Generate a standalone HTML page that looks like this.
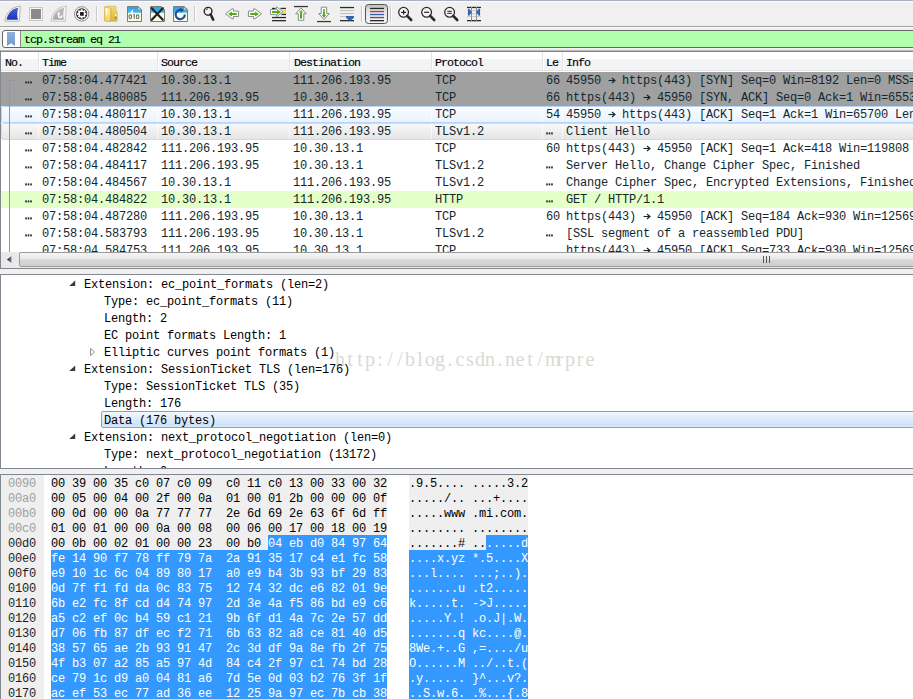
<!DOCTYPE html><html><head><meta charset="utf-8"><style>
*{margin:0;padding:0;box-sizing:border-box}
html,body{width:913px;height:699px;overflow:hidden;background:#f0f0f0}
body{position:relative;font-family:"Liberation Mono",monospace}
.a{position:absolute}
.t{position:absolute;white-space:pre;font-family:"Liberation Mono",monospace;font-size:12px;letter-spacing:-0.2px;line-height:17px;padding-top:1px;color:#12272e}
.h{position:absolute;white-space:pre;font-family:"Liberation Mono",monospace;font-size:11.667px;letter-spacing:-1px;line-height:18px;color:#000;-webkit-text-stroke:0.15px #000}
.x{position:absolute;white-space:pre;font-family:"Liberation Mono",monospace;font-size:12px;letter-spacing:-0.2px;line-height:15px;padding-top:2px;color:#000}
</style></head><body>
<div class="a" style="left:0;top:0;width:913px;height:1px;background:#a9b3c4"></div>
<div class="a" style="left:0;top:1px;width:913px;height:1px;background:#fbfbfb"></div>
<div class="a" style="left:0;top:26px;width:913px;height:1px;background:#a3a3a3"></div>
<div class="a" style="left:0;top:27px;width:913px;height:1px;background:#fdfdfd"></div>
<div class="a" style="left:2px;top:30px;width:920px;height:18px;border:1px solid #666;border-radius:3px;background:#fff"></div>
<div class="a" style="left:21px;top:31px;width:900px;height:16px;background:#afffaf"></div>
<div class="a" style="left:20px;top:31px;width:1px;height:16px;background:#8a8a8a"></div>
<svg class="a" style="left:7px;top:32px" width="8" height="14" viewBox="0 0 8 14"><defs><linearGradient id="bm" x1="0" y1="0" x2="0" y2="1"><stop offset="0" stop-color="#8fb2dc"/><stop offset="1" stop-color="#6f9ad0"/></linearGradient></defs><path d="M0 0H8V14L4 11.2L0 14Z" fill="url(#bm)"/></svg>
<div class="h" style="left:24px;top:31px;line-height:18px">tcp.stream eq 21</div>
<div class="a" style="left:0;top:50px;width:913px;height:219px;background:#fff;border-top:1px solid #b9b9b9;border-left:1px solid #828790;border-bottom:1px solid #828790"></div>
<div class="a" style="left:1px;top:51px;width:912px;height:1px;background:#828790"></div>
<div class="a" style="left:1px;top:52px;width:912px;height:19px;background:linear-gradient(#fff 0,#fff 7px,#f3f4f6 7px,#f3f4f6 18px,#e5e5e5 18px)"></div>
<div class="a" style="left:38px;top:52px;width:1px;height:18px;background:#e3e4e6"></div>
<div class="a" style="left:39px;top:52px;width:1px;height:18px;background:#fff"></div>
<div class="a" style="left:157px;top:52px;width:1px;height:18px;background:#e3e4e6"></div>
<div class="a" style="left:158px;top:52px;width:1px;height:18px;background:#fff"></div>
<div class="a" style="left:289px;top:52px;width:1px;height:18px;background:#e3e4e6"></div>
<div class="a" style="left:290px;top:52px;width:1px;height:18px;background:#fff"></div>
<div class="a" style="left:431px;top:52px;width:1px;height:18px;background:#e3e4e6"></div>
<div class="a" style="left:432px;top:52px;width:1px;height:18px;background:#fff"></div>
<div class="a" style="left:542px;top:52px;width:1px;height:18px;background:#e3e4e6"></div>
<div class="a" style="left:543px;top:52px;width:1px;height:18px;background:#fff"></div>
<div class="a" style="left:562px;top:52px;width:1px;height:18px;background:#e3e4e6"></div>
<div class="a" style="left:563px;top:52px;width:1px;height:18px;background:#fff"></div>
<div class="h" style="left:5px;top:54px">No.</div>
<div class="h" style="left:42px;top:54px">Time</div>
<div class="h" style="left:161px;top:54px">Source</div>
<div class="h" style="left:294px;top:54px">Destination</div>
<div class="h" style="left:435px;top:54px">Protocol</div>
<div class="h" style="left:546px;top:54px">Le</div>
<div class="h" style="left:566px;top:54px">Info</div>
<div class="a" style="left:1px;top:72px;width:912px;height:180px;overflow:hidden">
<div class="a" style="left:0;top:0px;width:912px;height:17px;background:#a0a0a0"></div>
<svg class="a" style="left:24px;top:9px" width="7" height="3" viewBox="0 0 7 3"><rect x="0.2" y="0.4" width="1.6" height="2" fill="#12272e"/><rect x="2.7" y="0.4" width="1.6" height="2" fill="#12272e"/><rect x="5.2" y="0.4" width="1.6" height="2" fill="#12272e"/></svg>
<div class="t" style="left:41px;top:0px">07:58:04.477421</div>
<div class="t" style="left:160px;top:0px">10.30.13.1</div>
<div class="t" style="left:292px;top:0px">111.206.193.95</div>
<div class="t" style="left:434px;top:0px">TCP</div>
<div class="t" style="left:545px;top:0px">66</div>
<svg class="a" style="left:607px;top:5px" width="8" height="7" viewBox="0 0 8 7"><path d="M0.5 3.5H6.5" stroke="#12272e" stroke-width="1.1"/><path d="M4 1L7 3.5L4 6" fill="none" stroke="#12272e" stroke-width="1.1"/></svg>
<div class="t" style="left:565px;top:0px">45950   https(443) [SYN] Seq=0 Win=8192 Len=0 MSS=1460 WS=4 SACK_PERM=1</div>
<div class="a" style="left:0;top:17px;width:912px;height:17px;background:#a0a0a0"></div>
<svg class="a" style="left:24px;top:26px" width="7" height="3" viewBox="0 0 7 3"><rect x="0.2" y="0.4" width="1.6" height="2" fill="#12272e"/><rect x="2.7" y="0.4" width="1.6" height="2" fill="#12272e"/><rect x="5.2" y="0.4" width="1.6" height="2" fill="#12272e"/></svg>
<div class="t" style="left:41px;top:17px">07:58:04.480085</div>
<div class="t" style="left:160px;top:17px">111.206.193.95</div>
<div class="t" style="left:292px;top:17px">10.30.13.1</div>
<div class="t" style="left:434px;top:17px">TCP</div>
<div class="t" style="left:545px;top:17px">66</div>
<svg class="a" style="left:642px;top:22px" width="8" height="7" viewBox="0 0 8 7"><path d="M0.5 3.5H6.5" stroke="#12272e" stroke-width="1.1"/><path d="M4 1L7 3.5L4 6" fill="none" stroke="#12272e" stroke-width="1.1"/></svg>
<div class="t" style="left:565px;top:17px">https(443)   45950 [SYN, ACK] Seq=0 Ack=1 Win=65535 Len=0 MSS=1460</div>
<div class="a" style="left:0;top:34px;width:920px;height:17px;border:1px solid #b8d6fb;border-radius:2px;background:linear-gradient(#fcfdff,#e9f2fd)"></div>
<div class="a" style="left:37px;top:35px;width:1px;height:15px;background:rgba(255,255,255,0.6)"></div>
<div class="a" style="left:156px;top:35px;width:1px;height:15px;background:rgba(255,255,255,0.6)"></div>
<div class="a" style="left:288px;top:35px;width:1px;height:15px;background:rgba(255,255,255,0.6)"></div>
<div class="a" style="left:430px;top:35px;width:1px;height:15px;background:rgba(255,255,255,0.6)"></div>
<div class="a" style="left:541px;top:35px;width:1px;height:15px;background:rgba(255,255,255,0.6)"></div>
<div class="a" style="left:561px;top:35px;width:1px;height:15px;background:rgba(255,255,255,0.6)"></div>
<svg class="a" style="left:24px;top:43px" width="7" height="3" viewBox="0 0 7 3"><rect x="0.2" y="0.4" width="1.6" height="2" fill="#12272e"/><rect x="2.7" y="0.4" width="1.6" height="2" fill="#12272e"/><rect x="5.2" y="0.4" width="1.6" height="2" fill="#12272e"/></svg>
<div class="t" style="left:41px;top:34px">07:58:04.480117</div>
<div class="t" style="left:160px;top:34px">10.30.13.1</div>
<div class="t" style="left:292px;top:34px">111.206.193.95</div>
<div class="t" style="left:434px;top:34px">TCP</div>
<div class="t" style="left:545px;top:34px">54</div>
<svg class="a" style="left:607px;top:39px" width="8" height="7" viewBox="0 0 8 7"><path d="M0.5 3.5H6.5" stroke="#12272e" stroke-width="1.1"/><path d="M4 1L7 3.5L4 6" fill="none" stroke="#12272e" stroke-width="1.1"/></svg>
<div class="t" style="left:565px;top:34px">45950   https(443) [ACK] Seq=1 Ack=1 Win=65700 Len=0</div>
<div class="a" style="left:0;top:51px;width:920px;height:17px;border:1px solid #d9d9d9;border-radius:2px;background:linear-gradient(#f8f8f8,#e5e5e5)"></div>
<div class="a" style="left:37px;top:52px;width:1px;height:15px;background:rgba(255,255,255,0.6)"></div>
<div class="a" style="left:156px;top:52px;width:1px;height:15px;background:rgba(255,255,255,0.6)"></div>
<div class="a" style="left:288px;top:52px;width:1px;height:15px;background:rgba(255,255,255,0.6)"></div>
<div class="a" style="left:430px;top:52px;width:1px;height:15px;background:rgba(255,255,255,0.6)"></div>
<div class="a" style="left:541px;top:52px;width:1px;height:15px;background:rgba(255,255,255,0.6)"></div>
<div class="a" style="left:561px;top:52px;width:1px;height:15px;background:rgba(255,255,255,0.6)"></div>
<svg class="a" style="left:24px;top:60px" width="7" height="3" viewBox="0 0 7 3"><rect x="0.2" y="0.4" width="1.6" height="2" fill="#12272e"/><rect x="2.7" y="0.4" width="1.6" height="2" fill="#12272e"/><rect x="5.2" y="0.4" width="1.6" height="2" fill="#12272e"/></svg>
<div class="t" style="left:41px;top:51px">07:58:04.480504</div>
<div class="t" style="left:160px;top:51px">10.30.13.1</div>
<div class="t" style="left:292px;top:51px">111.206.193.95</div>
<div class="t" style="left:434px;top:51px">TLSv1.2</div>
<svg class="a" style="left:545px;top:60px" width="7" height="3" viewBox="0 0 7 3"><rect x="0.2" y="0.4" width="1.6" height="2" fill="#12272e"/><rect x="2.7" y="0.4" width="1.6" height="2" fill="#12272e"/><rect x="5.2" y="0.4" width="1.6" height="2" fill="#12272e"/></svg>
<div class="t" style="left:565px;top:51px">Client Hello</div>
<svg class="a" style="left:24px;top:77px" width="7" height="3" viewBox="0 0 7 3"><rect x="0.2" y="0.4" width="1.6" height="2" fill="#12272e"/><rect x="2.7" y="0.4" width="1.6" height="2" fill="#12272e"/><rect x="5.2" y="0.4" width="1.6" height="2" fill="#12272e"/></svg>
<div class="t" style="left:41px;top:68px">07:58:04.482842</div>
<div class="t" style="left:160px;top:68px">111.206.193.95</div>
<div class="t" style="left:292px;top:68px">10.30.13.1</div>
<div class="t" style="left:434px;top:68px">TCP</div>
<div class="t" style="left:545px;top:68px">60</div>
<svg class="a" style="left:642px;top:73px" width="8" height="7" viewBox="0 0 8 7"><path d="M0.5 3.5H6.5" stroke="#12272e" stroke-width="1.1"/><path d="M4 1L7 3.5L4 6" fill="none" stroke="#12272e" stroke-width="1.1"/></svg>
<div class="t" style="left:565px;top:68px">https(443)   45950 [ACK] Seq=1 Ack=418 Win=119808 Len=0</div>
<svg class="a" style="left:24px;top:94px" width="7" height="3" viewBox="0 0 7 3"><rect x="0.2" y="0.4" width="1.6" height="2" fill="#12272e"/><rect x="2.7" y="0.4" width="1.6" height="2" fill="#12272e"/><rect x="5.2" y="0.4" width="1.6" height="2" fill="#12272e"/></svg>
<div class="t" style="left:41px;top:85px">07:58:04.484117</div>
<div class="t" style="left:160px;top:85px">111.206.193.95</div>
<div class="t" style="left:292px;top:85px">10.30.13.1</div>
<div class="t" style="left:434px;top:85px">TLSv1.2</div>
<svg class="a" style="left:545px;top:94px" width="7" height="3" viewBox="0 0 7 3"><rect x="0.2" y="0.4" width="1.6" height="2" fill="#12272e"/><rect x="2.7" y="0.4" width="1.6" height="2" fill="#12272e"/><rect x="5.2" y="0.4" width="1.6" height="2" fill="#12272e"/></svg>
<div class="t" style="left:565px;top:85px">Server Hello, Change Cipher Spec, Finished</div>
<svg class="a" style="left:24px;top:111px" width="7" height="3" viewBox="0 0 7 3"><rect x="0.2" y="0.4" width="1.6" height="2" fill="#12272e"/><rect x="2.7" y="0.4" width="1.6" height="2" fill="#12272e"/><rect x="5.2" y="0.4" width="1.6" height="2" fill="#12272e"/></svg>
<div class="t" style="left:41px;top:102px">07:58:04.484567</div>
<div class="t" style="left:160px;top:102px">10.30.13.1</div>
<div class="t" style="left:292px;top:102px">111.206.193.95</div>
<div class="t" style="left:434px;top:102px">TLSv1.2</div>
<svg class="a" style="left:545px;top:111px" width="7" height="3" viewBox="0 0 7 3"><rect x="0.2" y="0.4" width="1.6" height="2" fill="#12272e"/><rect x="2.7" y="0.4" width="1.6" height="2" fill="#12272e"/><rect x="5.2" y="0.4" width="1.6" height="2" fill="#12272e"/></svg>
<div class="t" style="left:565px;top:102px">Change Cipher Spec, Encrypted Extensions, Finished</div>
<div class="a" style="left:0;top:119px;width:912px;height:17px;background:#e4ffc7"></div>
<svg class="a" style="left:24px;top:128px" width="7" height="3" viewBox="0 0 7 3"><rect x="0.2" y="0.4" width="1.6" height="2" fill="#12272e"/><rect x="2.7" y="0.4" width="1.6" height="2" fill="#12272e"/><rect x="5.2" y="0.4" width="1.6" height="2" fill="#12272e"/></svg>
<div class="t" style="left:41px;top:119px">07:58:04.484822</div>
<div class="t" style="left:160px;top:119px">10.30.13.1</div>
<div class="t" style="left:292px;top:119px">111.206.193.95</div>
<div class="t" style="left:434px;top:119px">HTTP</div>
<svg class="a" style="left:545px;top:128px" width="7" height="3" viewBox="0 0 7 3"><rect x="0.2" y="0.4" width="1.6" height="2" fill="#12272e"/><rect x="2.7" y="0.4" width="1.6" height="2" fill="#12272e"/><rect x="5.2" y="0.4" width="1.6" height="2" fill="#12272e"/></svg>
<div class="t" style="left:565px;top:119px">GET / HTTP/1.1</div>
<svg class="a" style="left:24px;top:145px" width="7" height="3" viewBox="0 0 7 3"><rect x="0.2" y="0.4" width="1.6" height="2" fill="#12272e"/><rect x="2.7" y="0.4" width="1.6" height="2" fill="#12272e"/><rect x="5.2" y="0.4" width="1.6" height="2" fill="#12272e"/></svg>
<div class="t" style="left:41px;top:136px">07:58:04.487280</div>
<div class="t" style="left:160px;top:136px">111.206.193.95</div>
<div class="t" style="left:292px;top:136px">10.30.13.1</div>
<div class="t" style="left:434px;top:136px">TCP</div>
<div class="t" style="left:545px;top:136px">60</div>
<svg class="a" style="left:642px;top:141px" width="8" height="7" viewBox="0 0 8 7"><path d="M0.5 3.5H6.5" stroke="#12272e" stroke-width="1.1"/><path d="M4 1L7 3.5L4 6" fill="none" stroke="#12272e" stroke-width="1.1"/></svg>
<div class="t" style="left:565px;top:136px">https(443)   45950 [ACK] Seq=184 Ack=930 Win=125696 Len=0</div>
<svg class="a" style="left:24px;top:162px" width="7" height="3" viewBox="0 0 7 3"><rect x="0.2" y="0.4" width="1.6" height="2" fill="#12272e"/><rect x="2.7" y="0.4" width="1.6" height="2" fill="#12272e"/><rect x="5.2" y="0.4" width="1.6" height="2" fill="#12272e"/></svg>
<div class="t" style="left:41px;top:153px">07:58:04.583793</div>
<div class="t" style="left:160px;top:153px">111.206.193.95</div>
<div class="t" style="left:292px;top:153px">10.30.13.1</div>
<div class="t" style="left:434px;top:153px">TLSv1.2</div>
<svg class="a" style="left:545px;top:162px" width="7" height="3" viewBox="0 0 7 3"><rect x="0.2" y="0.4" width="1.6" height="2" fill="#12272e"/><rect x="2.7" y="0.4" width="1.6" height="2" fill="#12272e"/><rect x="5.2" y="0.4" width="1.6" height="2" fill="#12272e"/></svg>
<div class="t" style="left:565px;top:153px">[SSL segment of a reassembled PDU]</div>
<div class="t" style="left:41px;top:170px">07:58:04.584753</div>
<div class="t" style="left:160px;top:170px">111.206.193.95</div>
<div class="t" style="left:292px;top:170px">10.30.13.1</div>
<div class="t" style="left:434px;top:170px">TCP</div>
<svg class="a" style="left:642px;top:175px" width="8" height="7" viewBox="0 0 8 7"><path d="M0.5 3.5H6.5" stroke="#12272e" stroke-width="1.1"/><path d="M4 1L7 3.5L4 6" fill="none" stroke="#12272e" stroke-width="1.1"/></svg>
<div class="t" style="left:565px;top:170px">https(443)   45950 [ACK] Seq=733 Ack=930 Win=125696 Len=0</div>
<div class="a" style="left:8px;top:8px;width:1px;height:172px;background:#8e989e"></div>
<div class="a" style="left:8px;top:8px;width:8px;height:1px;background:#8e989e"></div>
</div>
<div class="a" style="left:1px;top:252px;width:912px;height:16px;background:#e9e9e9"></div>
<svg class="a" style="left:7px;top:256px" width="5" height="7" viewBox="0 0 5 7"><defs><linearGradient id="sa" x1="0" y1="0" x2="1" y2="0"><stop offset="0" stop-color="#111"/><stop offset="1" stop-color="#888"/></linearGradient></defs><path d="M4.5 0V7L0 3.5Z" fill="url(#sa)"/></svg>
<div class="a" style="left:19px;top:252px;width:900px;height:15px;border:1px solid #9b9b9b;border-radius:2px;background:linear-gradient(#f6f6f6 0,#e8e8e8 45%,#d6d6d6 55%,#cfcfcf 100%)"></div>
<div class="a" style="left:763px;top:256px;width:7px;height:7px;background:repeating-linear-gradient(90deg,#555 0,#555 1px,transparent 1px,transparent 3px)"></div>
<div class="a" style="left:0;top:274px;width:913px;height:195px;background:#fff;border-top:1px solid #828790;border-left:1px solid #828790;border-bottom:1px solid #828790"></div>
<div class="a" style="left:335px;top:347px;font-family:'Liberation Serif',serif;font-size:20px;line-height:24px;color:#dadad6;white-space:pre"><span style="display:inline-block;width:10px;text-align:center">h</span><span style="display:inline-block;width:10px;text-align:center">t</span><span style="display:inline-block;width:10px;text-align:center">t</span><span style="display:inline-block;width:10px;text-align:center">p</span><span style="display:inline-block;width:10px;text-align:center">:</span><span style="display:inline-block;width:10px;text-align:center">/</span><span style="display:inline-block;width:10px;text-align:center">/</span><span style="display:inline-block;width:10px;text-align:center">b</span><span style="display:inline-block;width:10px;text-align:center">l</span><span style="display:inline-block;width:10px;text-align:center">o</span><span style="display:inline-block;width:10px;text-align:center">g</span><span style="display:inline-block;width:10px;text-align:center">.</span><span style="display:inline-block;width:10px;text-align:center">c</span><span style="display:inline-block;width:10px;text-align:center">s</span><span style="display:inline-block;width:10px;text-align:center">d</span><span style="display:inline-block;width:10px;text-align:center">n</span><span style="display:inline-block;width:10px;text-align:center">.</span><span style="display:inline-block;width:10px;text-align:center">n</span><span style="display:inline-block;width:10px;text-align:center">e</span><span style="display:inline-block;width:10px;text-align:center">t</span><span style="display:inline-block;width:10px;text-align:center">/</span><span style="display:inline-block;width:10px;text-align:center">m</span><span style="display:inline-block;width:10px;text-align:center">r</span><span style="display:inline-block;width:10px;text-align:center">p</span><span style="display:inline-block;width:10px;text-align:center">r</span><span style="display:inline-block;width:10px;text-align:center">e</span></div>
<div class="a" style="left:1px;top:275px;width:912px;height:193px;overflow:hidden">
<svg class="a" style="left:68px;top:5px" width="8" height="8" viewBox="0 0 8 8"><path d="M6.2 0.5V6H0.2Z" fill="#3a3a3a"/></svg>
<div class="t" style="left:83px;top:0px;padding-top:2px;color:#000">Extension: ec_point_formats (len=2)</div>
<div class="t" style="left:103px;top:17px;padding-top:2px;color:#000">Type: ec_point_formats (11)</div>
<div class="t" style="left:103px;top:34px;padding-top:2px;color:#000">Length: 2</div>
<div class="t" style="left:103px;top:51px;padding-top:2px;color:#000">EC point formats Length: 1</div>
<svg class="a" style="left:88px;top:72px" width="8" height="10" viewBox="0 0 8 10"><path d="M1.5 1.5L5.5 5L1.5 8.5Z" fill="none" stroke="#909090"/></svg>
<div class="t" style="left:103px;top:68px;padding-top:2px;color:#000">Elliptic curves point formats (1)</div>
<svg class="a" style="left:68px;top:90px" width="8" height="8" viewBox="0 0 8 8"><path d="M6.2 0.5V6H0.2Z" fill="#3a3a3a"/></svg>
<div class="t" style="left:83px;top:85px;padding-top:2px;color:#000">Extension: SessionTicket TLS (len=176)</div>
<div class="t" style="left:103px;top:102px;padding-top:2px;color:#000">Type: SessionTicket TLS (35)</div>
<div class="t" style="left:103px;top:119px;padding-top:2px;color:#000">Length: 176</div>
<div class="a" style="left:100px;top:136px;width:830px;height:17px;border:1px solid #7da2ce;border-radius:2px;background:linear-gradient(#f8fbff 0,#edf5fe 1px,#dceafc 55%,#cce2fb 92%,#e6f0fd 100%)"></div>
<div class="t" style="left:103px;top:136px;padding-top:2px;color:#000">Data (176 bytes)</div>
<svg class="a" style="left:68px;top:158px" width="8" height="8" viewBox="0 0 8 8"><path d="M6.2 0.5V6H0.2Z" fill="#3a3a3a"/></svg>
<div class="t" style="left:83px;top:153px;padding-top:2px;color:#000">Extension: next_protocol_negotiation (len=0)</div>
<div class="t" style="left:103px;top:170px;padding-top:2px;color:#000">Type: next_protocol_negotiation (13172)</div>
<div class="t" style="left:103px;top:187px;padding-top:2px;color:#000">Length: 0</div>
</div>
<div class="a" style="left:0;top:474px;width:913px;height:230px;background:#fff;border-top:1px solid #828790;border-left:1px solid #828790"></div>
<div class="a" style="left:1px;top:475px;width:43px;height:230px;background:#efefef"></div>
<div class="x" style="left:8px;top:475px;color:#a0a0a0">0090</div>
<div class="a" style="left:51px;top:475px;width:336px;height:15px;background:#efefef"></div>
<div class="a" style="left:409px;top:475px;width:119px;height:15px;background:#efefef"></div>
<div class="x" style="left:51px;top:475px">00 39 00 35 c0 07 c0 09  c0 11 c0 13 00 33 00 32</div>
<div class="x" style="left:409px;top:475px">.9.5.... .....3.2</div>
<div class="x" style="left:8px;top:490px;color:#a0a0a0">00a0</div>
<div class="a" style="left:51px;top:490px;width:336px;height:15px;background:#efefef"></div>
<div class="a" style="left:409px;top:490px;width:119px;height:15px;background:#efefef"></div>
<div class="x" style="left:51px;top:490px">00 05 00 04 00 2f 00 0a  01 00 01 2b 00 00 00 0f</div>
<div class="x" style="left:409px;top:490px">...../.. ...+....</div>
<div class="x" style="left:8px;top:505px;color:#a0a0a0">00b0</div>
<div class="a" style="left:51px;top:505px;width:336px;height:15px;background:#efefef"></div>
<div class="a" style="left:409px;top:505px;width:119px;height:15px;background:#efefef"></div>
<div class="x" style="left:51px;top:505px">00 0d 00 00 0a 77 77 77  2e 6d 69 2e 63 6f 6d ff</div>
<div class="x" style="left:409px;top:505px">.....www .mi.com.</div>
<div class="x" style="left:8px;top:520px;color:#a0a0a0">00c0</div>
<div class="a" style="left:51px;top:520px;width:336px;height:15px;background:#efefef"></div>
<div class="a" style="left:409px;top:520px;width:119px;height:15px;background:#efefef"></div>
<div class="x" style="left:51px;top:520px">01 00 01 00 00 0a 00 08  00 06 00 17 00 18 00 19</div>
<div class="x" style="left:409px;top:520px">........ ........</div>
<div class="x" style="left:8px;top:535px;color:#1e1e1e">00d0</div>
<div class="a" style="left:51px;top:535px;width:217px;height:15px;background:#efefef"></div>
<div class="a" style="left:268px;top:535px;width:119px;height:15px;background:#3399ff"></div>
<div class="a" style="left:409px;top:535px;width:77px;height:15px;background:#efefef"></div>
<div class="a" style="left:486px;top:535px;width:42px;height:15px;background:#3399ff"></div>
<div class="x" style="left:51px;top:535px">00 0b 00 02 01 00 00 23  00 b0 </div>
<div class="x" style="left:268px;top:535px;color:#fff">04 eb d0 84 97 64</div>
<div class="x" style="left:409px;top:535px">.......# ..</div>
<div class="x" style="left:486px;top:535px;color:#fff">.....d</div>
<div class="x" style="left:8px;top:550px;color:#1e1e1e">00e0</div>
<div class="a" style="left:51px;top:550px;width:336px;height:15px;background:#3399ff"></div>
<div class="a" style="left:409px;top:550px;width:119px;height:15px;background:#3399ff"></div>
<div class="x" style="left:51px;top:550px;color:#fff">fe 14 90 f7 78 ff 79 7a  2a 91 35 17 c4 e1 fc 58</div>
<div class="x" style="left:409px;top:550px;color:#fff">....x.yz *.5....X</div>
<div class="x" style="left:8px;top:565px;color:#1e1e1e">00f0</div>
<div class="a" style="left:51px;top:565px;width:336px;height:15px;background:#3399ff"></div>
<div class="a" style="left:409px;top:565px;width:119px;height:15px;background:#3399ff"></div>
<div class="x" style="left:51px;top:565px;color:#fff">e9 10 1c 6c 04 89 80 17  a0 e9 b4 3b 93 bf 29 83</div>
<div class="x" style="left:409px;top:565px;color:#fff">...l.... ...;..).</div>
<div class="x" style="left:8px;top:580px;color:#1e1e1e">0100</div>
<div class="a" style="left:51px;top:580px;width:336px;height:15px;background:#3399ff"></div>
<div class="a" style="left:409px;top:580px;width:119px;height:15px;background:#3399ff"></div>
<div class="x" style="left:51px;top:580px;color:#fff">0d 7f f1 fd da 0c 83 75  12 74 32 dc e6 82 01 9e</div>
<div class="x" style="left:409px;top:580px;color:#fff">.......u .t2.....</div>
<div class="x" style="left:8px;top:595px;color:#1e1e1e">0110</div>
<div class="a" style="left:51px;top:595px;width:336px;height:15px;background:#3399ff"></div>
<div class="a" style="left:409px;top:595px;width:119px;height:15px;background:#3399ff"></div>
<div class="x" style="left:51px;top:595px;color:#fff">6b e2 fc 8f cd d4 74 97  2d 3e 4a f5 86 bd e9 c6</div>
<div class="x" style="left:409px;top:595px;color:#fff">k.....t. -&gt;J.....</div>
<div class="x" style="left:8px;top:610px;color:#1e1e1e">0120</div>
<div class="a" style="left:51px;top:610px;width:336px;height:15px;background:#3399ff"></div>
<div class="a" style="left:409px;top:610px;width:119px;height:15px;background:#3399ff"></div>
<div class="x" style="left:51px;top:610px;color:#fff">a5 c2 ef 0c b4 59 c1 21  9b 6f d1 4a 7c 2e 57 dd</div>
<div class="x" style="left:409px;top:610px;color:#fff">.....Y.! .o.J|.W.</div>
<div class="x" style="left:8px;top:625px;color:#1e1e1e">0130</div>
<div class="a" style="left:51px;top:625px;width:336px;height:15px;background:#3399ff"></div>
<div class="a" style="left:409px;top:625px;width:119px;height:15px;background:#3399ff"></div>
<div class="x" style="left:51px;top:625px;color:#fff">d7 06 fb 87 df ec f2 71  6b 63 82 a8 ce 81 40 d5</div>
<div class="x" style="left:409px;top:625px;color:#fff">.......q kc....@.</div>
<div class="x" style="left:8px;top:640px;color:#1e1e1e">0140</div>
<div class="a" style="left:51px;top:640px;width:336px;height:15px;background:#3399ff"></div>
<div class="a" style="left:409px;top:640px;width:119px;height:15px;background:#3399ff"></div>
<div class="x" style="left:51px;top:640px;color:#fff">38 57 65 ae 2b 93 91 47  2c 3d df 9a 8e fb 2f 75</div>
<div class="x" style="left:409px;top:640px;color:#fff">8We.+..G ,=..../u</div>
<div class="x" style="left:8px;top:655px;color:#1e1e1e">0150</div>
<div class="a" style="left:51px;top:655px;width:336px;height:15px;background:#3399ff"></div>
<div class="a" style="left:409px;top:655px;width:119px;height:15px;background:#3399ff"></div>
<div class="x" style="left:51px;top:655px;color:#fff">4f b3 07 a2 85 a5 97 4d  84 c4 2f 97 c1 74 bd 28</div>
<div class="x" style="left:409px;top:655px;color:#fff">O......M ../..t.(</div>
<div class="x" style="left:8px;top:670px;color:#1e1e1e">0160</div>
<div class="a" style="left:51px;top:670px;width:336px;height:15px;background:#3399ff"></div>
<div class="a" style="left:409px;top:670px;width:119px;height:15px;background:#3399ff"></div>
<div class="x" style="left:51px;top:670px;color:#fff">ce 79 1c d9 a0 04 81 a6  7d 5e 0d 03 b2 76 3f 1f</div>
<div class="x" style="left:409px;top:670px;color:#fff">.y...... }^...v?.</div>
<div class="x" style="left:8px;top:685px;color:#1e1e1e">0170</div>
<div class="a" style="left:51px;top:685px;width:336px;height:15px;background:#3399ff"></div>
<div class="a" style="left:409px;top:685px;width:119px;height:15px;background:#3399ff"></div>
<div class="x" style="left:51px;top:685px;color:#fff">ac ef 53 ec 77 ad 36 ee  12 25 9a 97 ec 7b cb 38</div>
<div class="x" style="left:409px;top:685px;color:#fff">..S.w.6. .%...{.8</div>
<svg class="a" style="left:0;top:0" width="913" height="26" viewBox="0 0 913 26">
<defs><linearGradient id="fin" x1="0" y1="0" x2="0" y2="1"><stop offset="0" stop-color="#4a67dc"/><stop offset="1" stop-color="#1b33b5"/></linearGradient><linearGradient id="fing" x1="0" y1="0" x2="0" y2="1"><stop offset="0" stop-color="#bdbdbd"/><stop offset="1" stop-color="#a8a8a8"/></linearGradient><linearGradient id="fblue" x1="0" y1="0" x2="0" y2="1"><stop offset="0" stop-color="#1fa6f0"/><stop offset="1" stop-color="#4ab8f0"/></linearGradient><linearGradient id="fold" x1="0" y1="0" x2="0" y2="1"><stop offset="0" stop-color="#f4dc70"/><stop offset="1" stop-color="#dcb23a"/></linearGradient><linearGradient id="foldf" x1="0" y1="0" x2="0" y2="1"><stop offset="0" stop-color="#fbf0a8"/><stop offset="1" stop-color="#eed26a"/></linearGradient><linearGradient id="grn" x1="0" y1="0" x2="0" y2="1"><stop offset="0" stop-color="#7cd03a"/><stop offset="1" stop-color="#3a9a10"/></linearGradient><linearGradient id="btn" x1="0" y1="0" x2="0" y2="1"><stop offset="0" stop-color="#bcbcbc"/><stop offset="0.35" stop-color="#e4e4e4"/><stop offset="1" stop-color="#f4f4f4"/></linearGradient></defs>
<path d="M4.8 21.2C6 13 11 6.8 20.4 6.2L19.3 21.2Z" fill="#fafafa" stroke="#b4b4b4" stroke-width="1"/>
<path d="M6.6 19.8C7.6 13.4 11.8 8.6 18.3 7.7C17 11.5 16.9 15.8 17.9 19.8Z" fill="url(#fin)"/>
<rect x="29.5" y="7.5" width="13" height="13" fill="#f8f8f8" stroke="#c8c8c8"/>
<rect x="31" y="9" width="10" height="10" fill="#8a8a8a"/>
<path d="M50.8 21.2C52 13 57 6.8 66.4 6.2L65.3 21.2Z" fill="#f6f6f6" stroke="#c4c4c4" stroke-width="1"/>
<path d="M52.6 19.8C53.6 13.4 57.8 8.6 64.3 7.7C63 11.5 62.9 15.8 63.9 19.8Z" fill="url(#fing)"/>
<path d="M58.6 13.6V15.8Q58.6 17.6 60.2 17.6Q61.8 17.6 61.9 15.2" fill="none" stroke="#fff" stroke-width="1.5"/>
<path d="M57.2 14.2L58.8 11.4L60.4 14.2Z" fill="#fff"/>
<circle cx="81.7" cy="13.9" r="7.2" fill="#fafafa" stroke="#8a8a8a" stroke-width="1"/>
<circle cx="81.7" cy="13.9" r="5.6" fill="#2b2b2b"/>
<g transform="translate(81.7 13.9)" fill="#fff"><rect x="-1" y="-4.6" width="2" height="2.2" transform="rotate(0)"/><rect x="-1" y="-4.6" width="2" height="2.2" transform="rotate(45)"/><rect x="-1" y="-4.6" width="2" height="2.2" transform="rotate(90)"/><rect x="-1" y="-4.6" width="2" height="2.2" transform="rotate(135)"/><rect x="-1" y="-4.6" width="2" height="2.2" transform="rotate(180)"/><rect x="-1" y="-4.6" width="2" height="2.2" transform="rotate(225)"/><rect x="-1" y="-4.6" width="2" height="2.2" transform="rotate(270)"/><rect x="-1" y="-4.6" width="2" height="2.2" transform="rotate(315)"/><circle r="3.4"/></g>
<rect x="80.1" y="12.1" width="3.6" height="3.6" fill="#111"/>
<rect x="96" y="6" width="1" height="16" fill="#c9c9c9"/><rect x="97" y="6" width="1" height="16" fill="#fff"/>
<rect x="194" y="6" width="1" height="16" fill="#c9c9c9"/><rect x="195" y="6" width="1" height="16" fill="#fff"/>
<rect x="361" y="6" width="1" height="16" fill="#c9c9c9"/><rect x="362" y="6" width="1" height="16" fill="#fff"/>
<rect x="390" y="6" width="1" height="16" fill="#c9c9c9"/><rect x="391" y="6" width="1" height="16" fill="#fff"/>
<path d="M104.5 7.2Q104.5 6.3 105.5 6.3H114.8Q116 6.3 116 7.5V11.5H117.2V20.5Q117.2 21.3 116.2 21.3H106Q104.5 21.3 104.5 20Z" fill="url(#fold)" stroke="#d4b04a" stroke-width="0.6"/>
<path d="M104.5 7.3L110.5 8V21.8L104.6 20.8Z" fill="url(#foldf)" stroke="#d8b448" stroke-width="0.6"/>
<rect x="110.3" y="8" width="1.4" height="13.6" fill="#d6b44a" opacity="0.6"/>
<rect x="106" y="8" width="1.2" height="7" fill="#fffbe0"/>
<rect x="115" y="14" width="1.3" height="2.5" fill="#f4f4f4"/><rect x="115" y="16.5" width="1.3" height="2.5" fill="#3a96d8"/>
<path d="M127.5 6.5H138.0L141.5 9.5V21.5H127.5Z" fill="#fbfbe6" stroke="#7b7b7b" stroke-width="1"/>
<path d="M128.0 7H137.8L141.0 10V12.8H128.0Z" fill="url(#fblue)"/>
<path d="M138.0 7V10H141.0Z" fill="#f6eedd" stroke="#7b7b7b" stroke-width="0.6"/>
<path d="M130.0 12.8C131.5 11 132.5 9.5 133.2 9.2C132.8 10.5 133.0 11.8 133.5 12.8Z" fill="#fff"/>
<g fill="none" stroke="#6e6e6e" stroke-width="1.1"><ellipse cx="130.3" cy="16.8" rx="1.3" ry="1.9"/><path d="M133.2 14.8L134.2 14.6V18.8"/><ellipse cx="137.6" cy="16.8" rx="1.3" ry="1.9"/></g>
<path d="M150.5 6.5H161.0L164.5 9.5V21.5H150.5Z" fill="#fbfbe6" stroke="#7b7b7b" stroke-width="1"/>
<path d="M151.0 7H160.8L164.0 10V12.8H151.0Z" fill="url(#fblue)"/>
<path d="M161.0 7V10H164.0Z" fill="#f6eedd" stroke="#7b7b7b" stroke-width="0.6"/>
<path d="M151.8 8.2L162.8 19.8M162.8 8.2L151.8 19.8" stroke="#222" stroke-width="2.2" stroke-linecap="round"/>
<path d="M173.5 6.5H184.0L187.5 9.5V21.5H173.5Z" fill="#fbfbe6" stroke="#7b7b7b" stroke-width="1"/>
<path d="M174.0 7H183.8L187.0 10V12.8H174.0Z" fill="url(#fblue)"/>
<path d="M184.0 7V10H187.0Z" fill="#f6eedd" stroke="#7b7b7b" stroke-width="0.6"/>
<path d="M182.0 10.3A4.6 4.6 0 1 0 184.8 14.5" fill="none" stroke="#1e4e9e" stroke-width="2.2"/>
<path d="M180.0 7.6L184.0 10.2L180.6 12.6Z" fill="#1e4e9e"/>
<circle cx="208.1" cy="11.3" r="3.9" fill="#f4f4f4" stroke="#2a2a2a" stroke-width="1.4"/>
<path d="M210.6 14.3L213.2 19.6" stroke="#2a2a2a" stroke-width="2.6" stroke-linecap="round"/>
<path d="M205.8 10.2Q206.5 9 208 8.8" fill="none" stroke="#333" stroke-width="0.9"/>
<path d="M225.5 13.8L232 8.9H233.4V11.1H238.6V16.5H233.4V18.7H232Z" fill="#fff" stroke="#8a8a8a" stroke-width="1" stroke-linejoin="round"/>
<path d="M228 14L232 11.5V13H236.8V15H232V16.5Z" fill="#4fb00e"/>
<g transform="translate(487 0) scale(-1 1)"><path d="M225.5 13.8L232 8.9H233.4V11.1H238.6V16.5H233.4V18.7H232Z" fill="#fff" stroke="#8a8a8a" stroke-width="1" stroke-linejoin="round"/><path d="M228 14L232 11.5V13H236.8V15H232V16.5Z" fill="#4fb00e"/></g>
<rect x="272.0" y="7.8" width="3.5" height="1.3" fill="#2a2a2a"/>
<rect x="280.5" y="7.8" width="5.5" height="1.3" fill="#2a2a2a"/>
<rect x="281.5" y="13.8" width="4.5" height="1.3" fill="#2a2a2a"/>
<rect x="272.0" y="16.9" width="14.0" height="1.3" fill="#2a2a2a"/>
<rect x="272.0" y="20.0" width="14.0" height="1.3" fill="#2a2a2a"/>
<path d="M270.5 9.5H276.5V6.8L283 11.8L276.5 16.8V14.5H270.5Z" fill="#fff" stroke="#8a8a8a" stroke-width="0.9" stroke-linejoin="round"/>
<path d="M272 11H277V9.3L281 12L277 14.7V13H272Z" fill="#4fb00e"/>
<rect x="283" y="10" width="3" height="2.8" fill="#f2de30"/>
<rect x="294" y="5.9" width="14" height="1.3" fill="#3a3a3a"/>
<path d="M301 7.8L306.3 13.8H303.8V20.3H298.3V13.8H295.7Z" fill="#fff" stroke="#8a8a8a" stroke-width="1" stroke-linejoin="round"/>
<path d="M301 9.8L303.3 12.5H302V18.6H300V12.5H298.7Z" fill="url(#grn)"/>
<rect x="317" y="20.9" width="14" height="1.3" fill="#3a3a3a"/>
<path d="M324 19.5L318.7 13.5H321.2V7.2H326.7V13.5H329.3Z" fill="#fff" stroke="#8a8a8a" stroke-width="1" stroke-linejoin="round"/>
<path d="M324 17.8L321.7 14.8H323V9H325V14.8H326.3Z" fill="url(#grn)"/>
<rect x="340" y="6.9" width="14" height="1.3" fill="#2a2a2a"/>
<rect x="340" y="10" width="14" height="1" fill="#c0c4b8"/>
<rect x="340" y="13" width="14" height="1" fill="#c0c4b8"/>
<rect x="340" y="16" width="6" height="1" fill="#c0c4b8"/>
<rect x="340" y="20" width="14" height="1.3" fill="#2a2a2a"/>
<path d="M346 16H354V17.2C354 18.5 351.5 19.5 350 21C348.5 19.5 346 18.5 346 17.2Z" fill="#2f64b4"/>
<rect x="365.5" y="4.5" width="22" height="19" rx="3" fill="url(#btn)" stroke="#555" stroke-width="1"/>
<rect x="370" y="7.8" width="14" height="1.3" fill="#2a2a2a"/>
<rect x="370" y="10.9" width="14" height="1.3" fill="#e42828"/>
<rect x="370" y="13.9" width="14" height="1.3" fill="#2f60b0"/>
<rect x="370" y="16.9" width="14" height="1.3" fill="#74427a"/>
<rect x="370" y="20.0" width="14" height="1.3" fill="#2a2a2a"/>
<circle cx="403.6" cy="12.3" r="4.9" fill="#f8f8f8" stroke="#2a2a2a" stroke-width="1.3"/>
<path d="M407.2 15.8L411.2 20" stroke="#2a2a2a" stroke-width="2.6" stroke-linecap="round"/>
<path d="M401.1 12.3H406.1M403.6 10V14.6" stroke="#222" stroke-width="1.2"/>
<circle cx="426.6" cy="12.3" r="4.9" fill="#f8f8f8" stroke="#2a2a2a" stroke-width="1.3"/>
<path d="M430.2 15.8L434.2 20" stroke="#2a2a2a" stroke-width="2.6" stroke-linecap="round"/>
<path d="M424.1 12.3H429.1" stroke="#222" stroke-width="1.2"/>
<circle cx="449.6" cy="12.3" r="4.9" fill="#f8f8f8" stroke="#2a2a2a" stroke-width="1.3"/>
<path d="M453.2 15.8L457.2 20" stroke="#2a2a2a" stroke-width="2.6" stroke-linecap="round"/>
<path d="M447.3 11.3H451.9M447.3 13.3H451.9" stroke="#222" stroke-width="1"/>
<rect x="467" y="6.8" width="14" height="1.3" fill="#2a2a2a"/>
<rect x="467" y="20" width="14" height="1.3" fill="#2a2a2a"/>
<rect x="467" y="10.2" width="14" height="0.9" fill="#c6c9bf"/>
<rect x="467" y="13.2" width="14" height="0.9" fill="#c6c9bf"/>
<rect x="467" y="16.2" width="14" height="0.9" fill="#c6c9bf"/>
<rect x="471" y="7" width="1" height="14" fill="#8c8c8c"/><rect x="476" y="7" width="1" height="14" fill="#8c8c8c"/>
<path d="M468 9Q468.5 8.6 469.3 9L471.8 12.3L469.3 15.6Q468.5 16 468 15.6Z" fill="#2f64b4"/>
<path d="M480 9Q479.5 8.6 478.7 9L476.2 12.3L478.7 15.6Q479.5 16 480 15.6Z" fill="#2f64b4"/>
</svg>
</body></html>
